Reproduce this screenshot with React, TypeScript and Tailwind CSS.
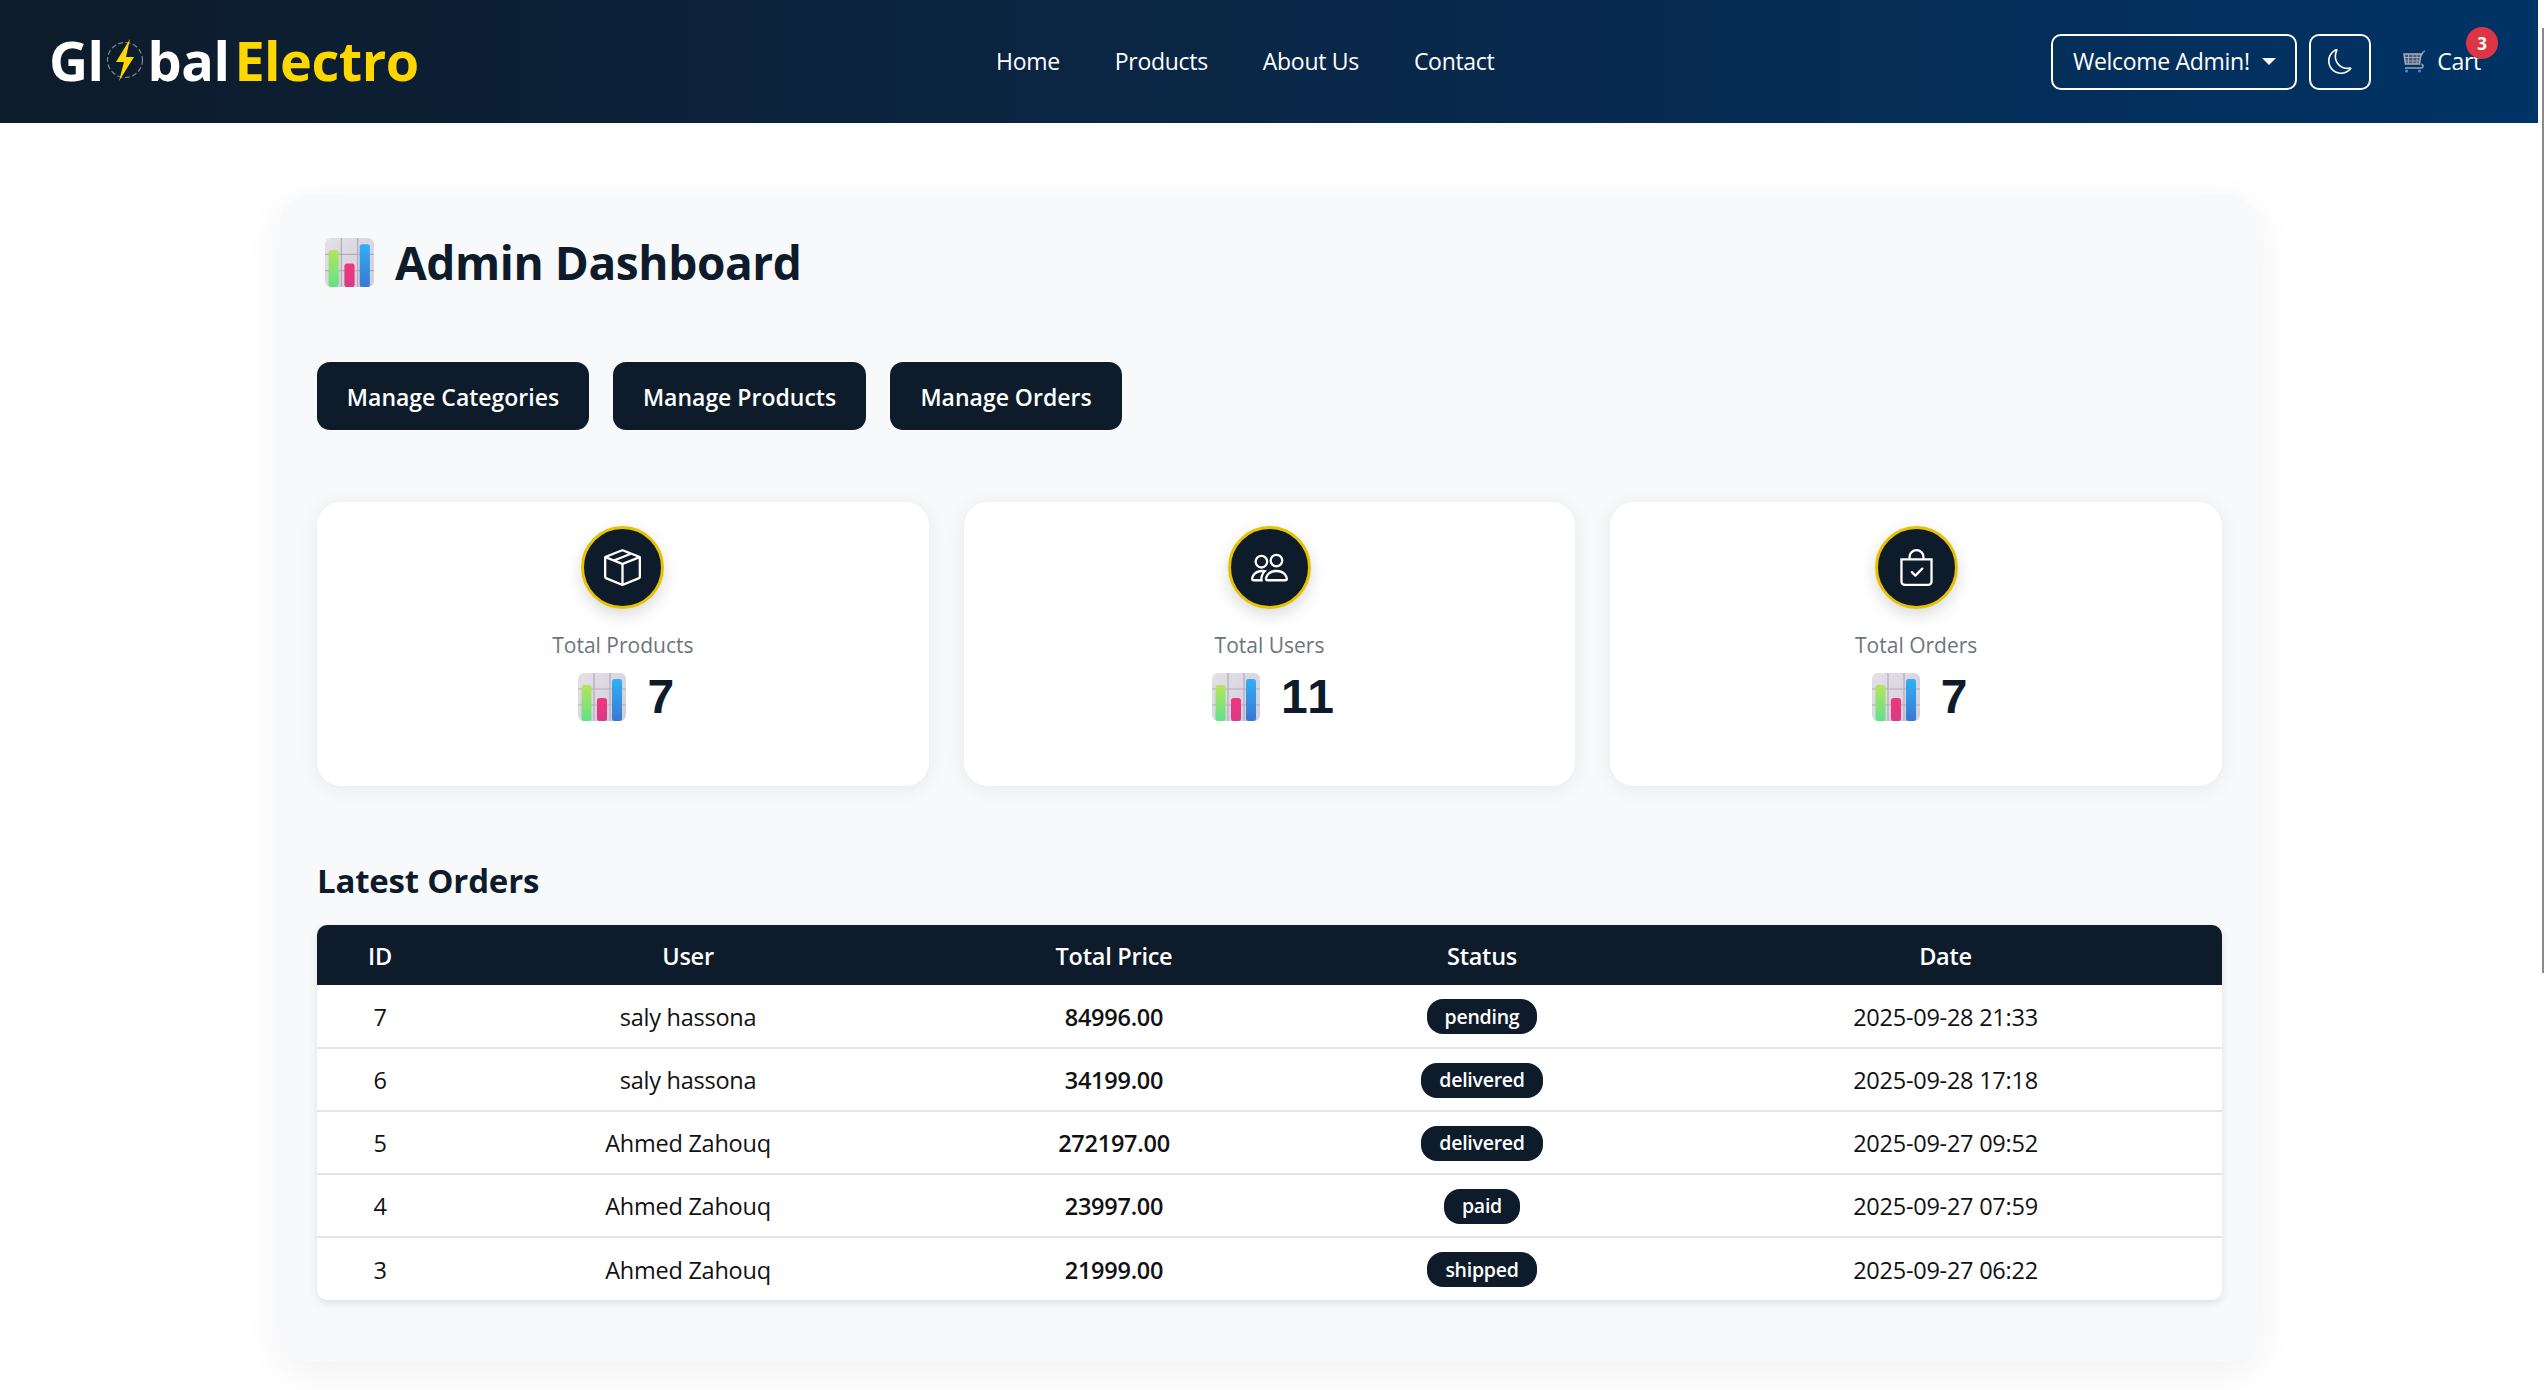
import { BsBagCheck, BsBoxSeam, BsMoon, BsPeople } from "react-icons/bs";

const orders = [
  { id: 7, user: "saly hassona", total: "84996.00", status: "pending", date: "2025-09-28 21:33" },
  { id: 6, user: "saly hassona", total: "34199.00", status: "delivered", date: "2025-09-28 17:18" },
  { id: 5, user: "Ahmed Zahouq", total: "272197.00", status: "delivered", date: "2025-09-27 09:52" },
  { id: 4, user: "Ahmed Zahouq", total: "23997.00", status: "paid", date: "2025-09-27 07:59" },
  { id: 3, user: "Ahmed Zahouq", total: "21999.00", status: "shipped", date: "2025-09-27 06:22" },
];

const ChartEmoji = ({ size = 48 }: { size?: number }) => (
  <svg width={size} height={size} viewBox="0 0 48 48" className="shrink-0">
    <defs>
      <linearGradient id="bg-tile" x1="0" y1="0" x2="1" y2="1">
        <stop offset="0" stopColor="#e3e0e8" />
        <stop offset="1" stopColor="#d2cddb" />
      </linearGradient>
      <linearGradient id="bar-green" x1="0" y1="0" x2="0" y2="1">
        <stop offset="0" stopColor="#b4e55a" />
        <stop offset="1" stopColor="#62e08a" />
      </linearGradient>
      <linearGradient id="bar-pink" x1="0" y1="0" x2="0" y2="1">
        <stop offset="0" stopColor="#f0367c" />
        <stop offset="1" stopColor="#d93a86" />
      </linearGradient>
      <linearGradient id="bar-blue" x1="0" y1="0" x2="0" y2="1">
        <stop offset="0" stopColor="#30b0f8" />
        <stop offset="1" stopColor="#3a78d0" />
      </linearGradient>
    </defs>
    <rect width="48" height="48" rx="6" fill="url(#bg-tile)" />
    <path d="M16 0v48M32 0v48M0 16h48M0 32h48" stroke="#b2abbb" strokeWidth="1.2" />
    <rect x="3.5" y="12" width="10" height="36" rx="2.5" fill="url(#bar-green)" />
    <rect x="19" y="25" width="10" height="23" rx="2.5" fill="url(#bar-pink)" />
    <rect x="34" y="6" width="10" height="42" rx="2.5" fill="url(#bar-blue)" />
  </svg>
);

const CartEmoji = () => (
  <svg width="24" height="23" viewBox="0 0 24 23" className="shrink-0" fill="none">
    <path d="M1 4h17l-1.5 10H2.5z" fill="#44597a" stroke="#a7adb8" strokeWidth="1.5" />
    <path d="M5.5 4v10M10 4v10M14 4v10M1.5 7.5h16M2 11h15" stroke="#a7adb8" strokeWidth="0.9" />
    <path d="M18 6 20 2" stroke="#9aa3b2" strokeWidth="1.6" />
    <path d="M20 2 22 1" stroke="#4f8fd6" strokeWidth="1.6" />
    <path d="M2 18h16c2.5 0 2.5-3 .5-4" stroke="#9aa3b2" strokeWidth="1.6" />
    <circle cx="3.5" cy="21" r="1.5" fill="#3f8fe0" />
    <circle cx="16.5" cy="21" r="1.5" fill="#3f8fe0" />
  </svg>
);

const Logo = () => (
  <div className="mb-[3px] flex h-[60px] w-[350px] items-center font-['Open_Sans',sans-serif] text-[54px] leading-none font-bold tracking-[-0.5px]">
    <span className="text-white">Gl</span>
    <svg width="40" height="46" viewBox="0 0 40 46" className="mr-[3px] ml-[1px] shrink-0" fill="none">
      <circle cx="20" cy="23" r="17.5" stroke="#7d8794" strokeWidth="1.2" strokeDasharray="5 2.5" />
      <path d="M25 2 11 25h8l-5 19 15-24h-8z" fill="#ffd700" />
    </svg>
    <span className="text-white">bal</span>
    <span className="ml-[5px] text-[#ffd700]">Electro</span>
  </div>
);

const StatCard = ({ icon, label, value }: { icon: React.ReactNode; label: string; value: string }) => (
  <div className="flex h-[284px] flex-col items-center rounded-[24px] bg-white pt-[24px] shadow-[0_3px_20px_rgba(0,0,0,0.07)]">
    <div className="flex h-[83px] w-[83px] items-center justify-center rounded-full border-[3px] border-[#e6c200] bg-[#0d1b2a] text-[37px] text-white shadow-[0_6px_16px_rgba(0,0,0,0.15)]">
      {icon}
    </div>
    <div className="mt-[20px] text-[21px] leading-[32px] text-[#6c757d]">{label}</div>
    <div className="mt-[6px] flex items-center gap-[21px] pl-[9px] text-[48px] leading-[60px] font-bold text-[#0d1b2a]">
      <ChartEmoji />
      <span className="font-['Liberation_Sans',sans-serif] tracking-[2px]">{value}</span>
    </div>
  </div>
);

const App = () => {
  return (
    <div className="relative h-[1390px] w-full overflow-hidden bg-white font-['Open_Sans',sans-serif] text-[#111]">
      <div className="flex h-full">
        <div className="w-[2538px] shrink-0">
          <nav className="flex h-[123px] items-center bg-gradient-to-r from-[#0d1b2a] to-[#003366] pl-[49px] pr-[42px] text-[23px] tracking-[-0.3px] text-white">
            <Logo />
            <ul className="ml-[597px] flex items-center gap-[55px]">
              <li>Home</li>
              <li>Products</li>
              <li>About Us</li>
              <li>Contact</li>
            </ul>
            <div className="ml-auto flex items-center">
              <button className="flex h-[56px] w-[246px] items-center justify-center gap-[12px] rounded-[10px] border-2 border-white">
                Welcome Admin!
                <span className="h-0 w-0 border-x-[7px] border-t-[7px] border-x-transparent border-t-white" />
              </button>
              <button className="ml-[12px] flex h-[56px] w-[62px] items-center justify-center rounded-[10px] border-2 border-white text-[25px]">
                <BsMoon />
              </button>
              <div className="relative ml-[32px] flex items-center gap-[10px] pr-[15px]">
                <CartEmoji />
                <span>Cart</span>
                <span className="absolute -top-[17px] -right-[2px] flex h-[32px] w-[32px] items-center justify-center rounded-full bg-[#dc3545] text-[17px] font-bold">
                  3
                </span>
              </div>
            </div>
          </nav>

          <main className="mx-auto mt-[72px] h-[1167px] w-[1980px] rounded-[32px] bg-[#f8f9fa] pr-[37px] pl-[38px] pt-[37px] shadow-[0_10px_40px_rgba(0,0,0,0.06)]">
            <div className="flex items-center gap-[21px] pl-[8px]">
              <ChartEmoji size={49} />
              <h1 className="text-[46px] leading-[60px] font-bold tracking-[-0.4px] text-[#0d1b2a]">Admin Dashboard</h1>
            </div>

            <div className="mt-[70px] flex gap-[24px]">
              {[
                ["Manage Categories", "w-[272px]"],
                ["Manage Products", "w-[253px]"],
                ["Manage Orders", "w-[232px]"],
              ].map(([label, width]) => (
                <button
                  key={label}
                  className={`${width} h-[68px] rounded-[13px] bg-[#0d1b2a] pt-[2px] text-[23px] font-semibold text-white`}
                >
                  {label}
                </button>
              ))}
            </div>

            <div className="mt-[72px] grid grid-cols-3 gap-[35px]">
              <StatCard icon={<BsBoxSeam />} label="Total Products" value="7" />
              <StatCard icon={<BsPeople />} label="Total Users" value="11" />
              <StatCard icon={<BsBagCheck />} label="Total Orders" value="7" />
            </div>

            <h2 className="mt-[71px] text-[33px] leading-[48px] font-bold tracking-[-0.2px] text-[#0d1b2a]">Latest Orders</h2>

            <div className="mt-[20px] overflow-hidden rounded-[10px] bg-white shadow-[0_3px_8px_rgba(0,0,0,0.1)]">
              <table className="w-full table-fixed text-center text-[23.5px] tracking-[-0.25px]">
                <thead>
                  <tr className="h-[60px] bg-[#0d1b2a] text-white">
                    <th className="w-[126px] pt-[3px] font-semibold">ID</th>
                    <th className="w-[490px] pt-[3px] font-semibold">User</th>
                    <th className="w-[362px] pt-[3px] font-semibold">Total Price</th>
                    <th className="w-[374px] pt-[3px] font-semibold">Status</th>
                    <th className="pt-[3px] font-semibold">Date</th>
                  </tr>
                </thead>
                <tbody>
                  {orders.map((order, i) => (
                    <tr key={order.id} className={`h-[63px] ${i < orders.length - 1 ? "border-b-2 border-[#e3e5e8]" : ""}`}>
                      <td className="pt-[3px]">{order.id}</td>
                      <td className="pt-[3px]">{order.user}</td>
                      <td className="pt-[3px] font-semibold">{order.total}</td>
                      <td>
                        <span className="inline-flex h-[35px] items-center rounded-[16px] bg-[#0d1b2a] px-[18px] text-[19.5px] font-semibold text-white">
                          {order.status}
                        </span>
                      </td>
                      <td className="pt-[3px]">{order.date}</td>
                    </tr>
                  ))}
                </tbody>
              </table>
            </div>
          </main>
        </div>
        <div className="relative w-[6px] shrink-0 bg-white">
          <div className="absolute top-[28px] right-0 h-[945px] w-[2px] bg-[#8a8a8a]" />
        </div>
      </div>
    </div>
  );
};

export default App;
